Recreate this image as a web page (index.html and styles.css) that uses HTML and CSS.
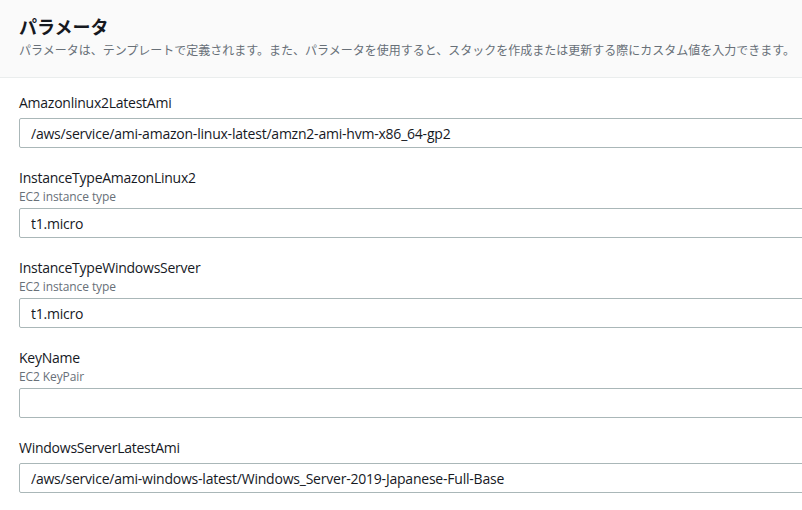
FILE: index.html
```html
<!DOCTYPE html>
<html lang="ja">
<head>
    <meta charset="UTF-8">
    <title>パラメータ</title>
    <link rel="stylesheet" href="styles.css">
</head>
<body>
    <div class="panel">
        <div class="panel-header">
            <h2>パラメータ</h2>
            <p>パラメータは、テンプレートで定義されます。また、パラメータを使用すると、スタックを作成または更新する際にカスタム値を入力できます。</p>
        </div>

        <form class="param-form">
            <div class="form-group">
                <label for="p1">Amazonlinux2LatestAmi</label>
                <input type="text" id="p1" value="/aws/service/ami-amazon-linux-latest/amzn2-ami-hvm-x86_64-gp2">
            </div>

            <div class="form-group">
                <label for="p2">InstanceTypeAmazonLinux2</label>
                <span class="hint">EC2 instance type</span>
                <input type="text" id="p2" value="t1.micro">
            </div>

            <div class="form-group">
                <label for="p3">InstanceTypeWindowsServer</label>
                <span class="hint">EC2 instance type</span>
                <input type="text" id="p3" value="t1.micro">
            </div>

            <div class="form-group">
                <label for="p4">KeyName</label>
                <span class="hint">EC2 KeyPair</span>
                <input type="text" id="p4" value="">
            </div>

            <div class="form-group">
                <label for="p5">WindowsServerLatestAmi</label>
                <input type="text" id="p5" value="/aws/service/ami-windows-latest/Windows_Server-2019-Japanese-Full-Base">
            </div>
        </form>
    </div>
</body>
</html>
```

FILE: styles.css
```css
:root {
    --text-color: #16191f;
    --muted-color: #687078;
    --border-color: #aab7b8;
    --header-bg: #fafafa;
}

* {
    margin: 0;
    padding: 0;
    box-sizing: border-box;
    font-family: 'Open Sans', 'Noto Sans CJK JP', sans-serif;
}

body {
    background-color: white;
    color: var(--text-color);
    overflow: hidden;
}

.panel-header {
    background-color: var(--header-bg);
    border-bottom: 1px solid #eaeded;
    padding: 14px 0 19px 19px;
}

.panel-header h2 {
    font-family: 'Noto Sans CJK JP', sans-serif;
    font-size: 18px;
    font-weight: 700;
    line-height: 24px;
    margin-bottom: 4px;
}

.panel-header p {
    font-family: 'Noto Sans CJK JP', sans-serif;
    font-size: 12px;
    line-height: 16px;
    color: var(--muted-color);
    white-space: nowrap;
}

.param-form {
    padding: 14px 0 0 19px;
}

.form-group {
    display: flex;
    flex-direction: column;
    margin-bottom: 19px;
}

label {
    font-size: 14px;
    line-height: 22px;
    letter-spacing: -0.25px;
}

.hint {
    font-size: 12px;
    line-height: 15px;
    letter-spacing: -0.1px;
    color: var(--muted-color);
}

input {
    margin-top: 4px;
    width: calc(100% + 4px);
    height: 30px;
    padding: 0 11px;
    border: 1px solid var(--border-color);
    border-radius: 2px;
    font-size: 14px;
    letter-spacing: -0.22px;
    color: var(--text-color);
    background-color: white;
}
```
